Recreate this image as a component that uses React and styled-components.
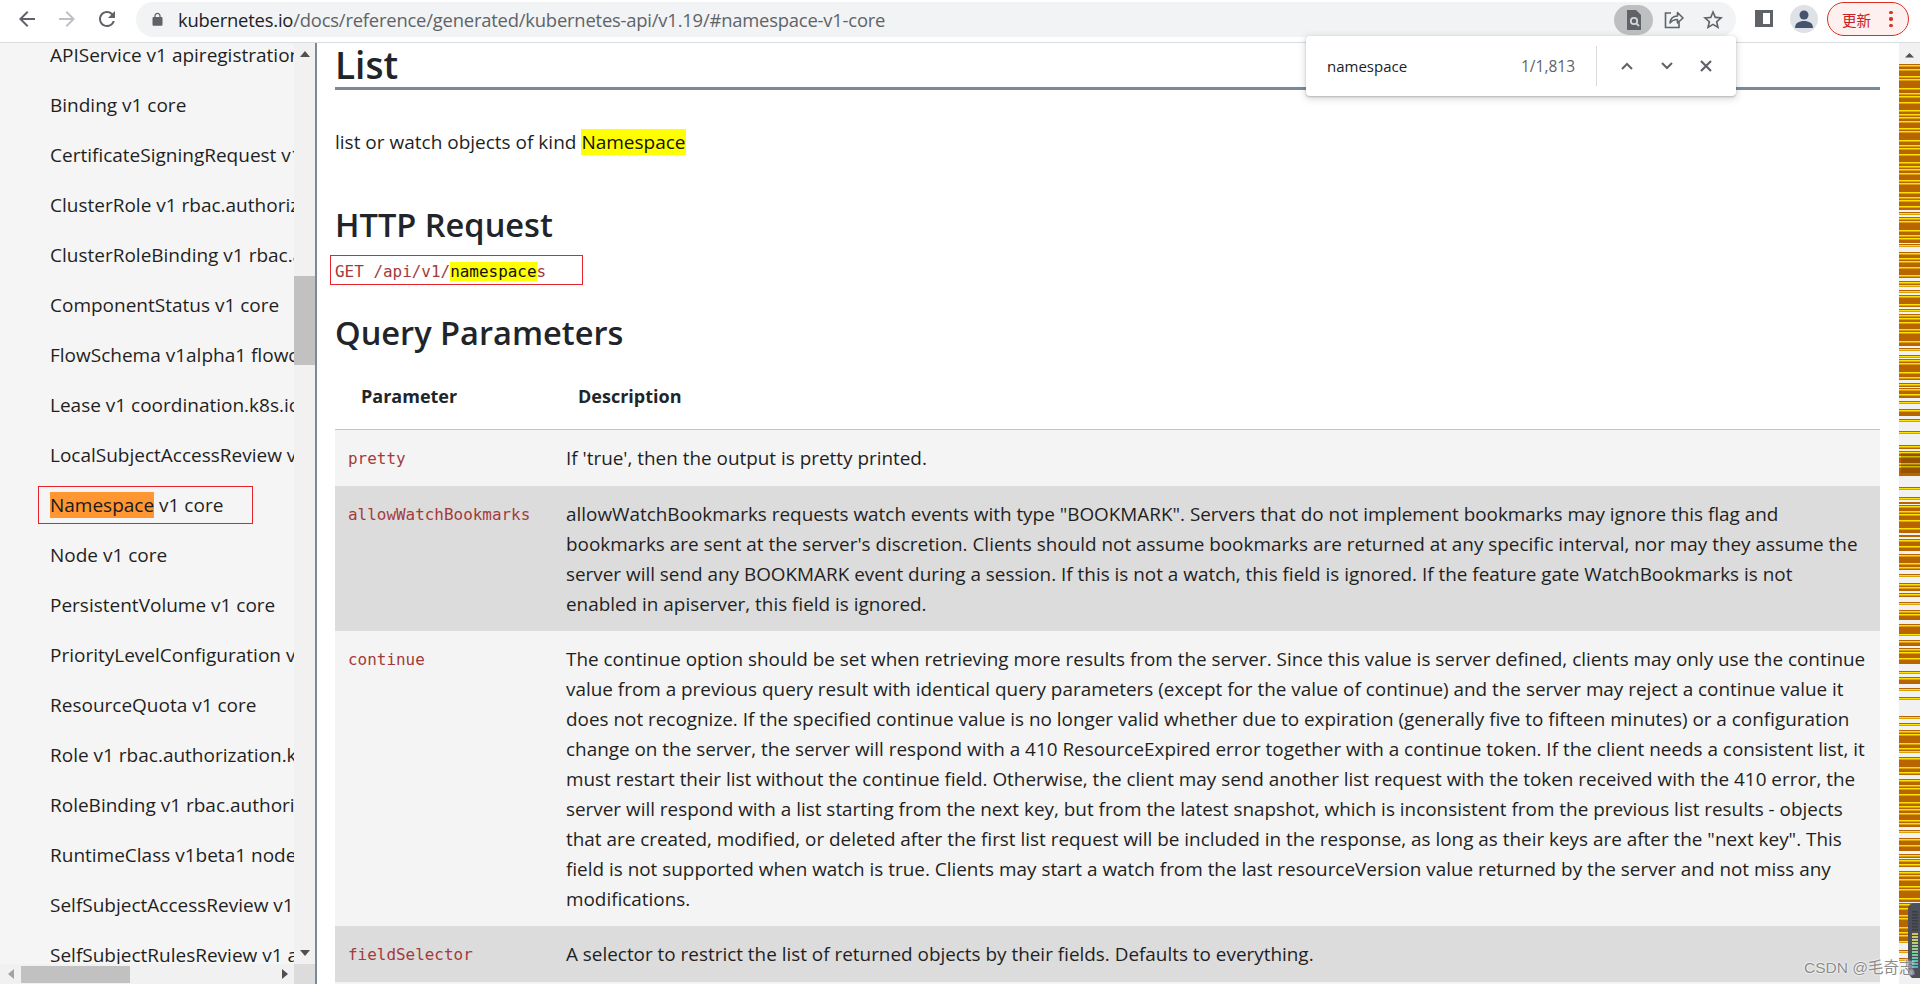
import React from 'react'
import styled, { createGlobalStyle } from 'styled-components'

const sideItems = [
  'APIService v1 apiregistration.k8s.io',
  'Binding v1 core',
  'CertificateSigningRequest v1 certificates.k8s.io',
  'ClusterRole v1 rbac.authorization.k8s.io',
  'ClusterRoleBinding v1 rbac.authorization.k8s.io',
  'ComponentStatus v1 core',
  'FlowSchema v1alpha1 flowcontrol.apiserver.k8s.io',
  'Lease v1 coordination.k8s.io',
  'LocalSubjectAccessReview v1 authorization.k8s.io',
  'Namespace v1 core',
  'Node v1 core',
  'PersistentVolume v1 core',
  'PriorityLevelConfiguration v1alpha1 flowcontrol',
  'ResourceQuota v1 core',
  'Role v1 rbac.authorization.k8s.io',
  'RoleBinding v1 rbac.authorization.k8s.io',
  'RuntimeClass v1beta1 node.k8s.io',
  'SelfSubjectAccessReview v1 authorization.k8s.io',
  'SelfSubjectRulesReview v1 authorization.k8s.io',
]

const params = [
  {
    name: 'pretty',
    lines: ["If 'true', then the output is pretty printed."],
  },
  {
    name: 'allowWatchBookmarks',
    lines: [
      'allowWatchBookmarks requests watch events with type "BOOKMARK". Servers that do not implement bookmarks may ignore this flag and',
      "bookmarks are sent at the server's discretion. Clients should not assume bookmarks are returned at any specific interval, nor may they assume the",
      'server will send any BOOKMARK event during a session. If this is not a watch, this field is ignored. If the feature gate WatchBookmarks is not',
      'enabled in apiserver, this field is ignored.',
    ],
  },
  {
    name: 'continue',
    lines: [
      'The continue option should be set when retrieving more results from the server. Since this value is server defined, clients may only use the continue',
      'value from a previous query result with identical query parameters (except for the value of continue) and the server may reject a continue value it',
      'does not recognize. If the specified continue value is no longer valid whether due to expiration (generally five to fifteen minutes) or a configuration',
      'change on the server, the server will respond with a 410 ResourceExpired error together with a continue token. If the client needs a consistent list, it',
      'must restart their list without the continue field. Otherwise, the client may send another list request with the token received with the 410 error, the',
      'server will respond with a list starting from the next key, but from the latest snapshot, which is inconsistent from the previous list results - objects',
      'that are created, modified, or deleted after the first list request will be included in the response, as long as their keys are after the "next key". This',
      'field is not supported when watch is true. Clients may start a watch from the last resourceVersion value returned by the server and not miss any',
      'modifications.',
    ],
  },
  {
    name: 'fieldSelector',
    lines: ['A selector to restrict the list of returned objects by their fields. Defaults to everything.'],
  },
]

// find-in-page tick marks, [top, bottom] in page pixels
const bands = [
  [64, 210], [212, 215], [217, 243], [244, 247], [252, 278], [281, 287], [290, 293], [295, 307],
  [309, 312], [314, 346], [348, 351], [355, 358], [359, 380], [383, 387], [388, 398], [401, 404],
  [409, 416], [419, 422], [431, 434], [445, 449], [451, 476], [487, 490], [497, 500], [502, 504],
  [505, 533], [535, 537], [539, 551], [554, 570], [574, 577], [583, 591], [593, 597], [602, 605],
  [610, 620], [624, 636], [640, 646], [648, 664], [671, 674], [677, 684], [688, 691], [697, 700],
  [716, 719], [723, 726], [730, 753], [757, 775], [779, 827], [830, 833], [838, 851], [854, 858],
  [859, 867], [871, 902], [903, 943], [950, 953], [958, 961],
]

const tickSteps = [4, 7, 3, 9, 5, 3, 6, 8, 4, 3]

const Ruler = () => {
  const ticks = []
  bands.forEach(([a, b], i) => {
    let y = a + 1
    let k = i
    while (y < b - 1) {
      ticks.push(y)
      y += tickSteps[k % tickSteps.length]
      k++
    }
  })
  return (
    <RulerSvg width="21" height="941" viewBox="0 0 21 941">
      <path d="M10.5 10 15 14.500H6z" fill="#505050" />
      {bands.map(([a, b]) => (
        <rect key={a} x="0" y={a - 43} width="21" height={b - a} fill="#b86500" />
      ))}
      {ticks.map((y) => (
        <rect key={y} x="0" y={y - 43} width="21" height="1.500" fill="#ffe100" />
      ))}
      <rect x="2" y="410" width="19" height="20" fill="#000" opacity="0.18" />
    </RulerSvg>
  )
}

const meterColors = ['#d2c25a', '#cfc862', '#c4cc6c', '#b5d077', '#a4d083', '#93d08e', '#82cf9a', '#74cba4', '#68c6ad', '#5ec0b3', '#58bab8', '#55b4bb']

const Meter = () => (
  <MeterSvg width="12" height="75" viewBox="0 0 12 75">
    <path d="M6 0h6v75H4l-4-4V6a6 6 0 0 1 6-6z" fill="#4d4f5b" />
    {[8, 11, 14, 17, 20, 23, 26].map((y) => (
      <rect key={y} x="4" y={y} width="6" height="1.500" fill="#3b3c45" />
    ))}
    {meterColors.map((c, i) => (
      <rect key={c} x="4" y={30 + i * 3} width="6" height="2" fill={c} />
    ))}
  </MeterSvg>
)

const Icon = ({ d, size = 24, color = '#5f6368' }) => (
  <svg width={size} height={size} viewBox="0 0 24 24" fill={color}>
    <path d={d} />
  </svg>
)

const ICONS = {
  back: 'M20 11H7.830l5.590-5.590L12 4l-8 8 8 8 1.410-1.410L7.830 13H20v-2z',
  forward: 'M12 4l-1.410 1.410L16.170 11H4v2h12.170l-5.580 5.590L12 20l8-8z',
  reload: 'M17.650 6.350A7.958 7.958 0 0 0 12 4c-4.420 0-7.990 3.580-7.990 8s3.570 8 7.990 8c3.730 0 6.840-2.550 7.730-6h-2.080A5.990 5.990 0 0 1 12 18c-3.310 0-6-2.690-6-6s2.690-6 6-6c1.660 0 3.140.690 4.220 1.780L13 11h7V4l-2.350 2.350z',
  lock: 'M18 8h-1V6c0-2.760-2.240-5-5-5S7 3.240 7 6v2H6c-1.100 0-2 .900-2 2v10c0 1.100.900 2 2 2h12c1.100 0 2-.900 2-2V10c0-1.100-.900-2-2-2zM9 6c0-1.660 1.340-3 3-3s3 1.340 3 3v2H9V6z',
  star: 'M22 9.240l-7.190-.620L12 2 9.190 8.630 2 9.240l5.460 4.730L5.820 21 12 17.270 18.180 21l-1.630-7.030L22 9.240zM12 15.400l-3.760 2.270 1-4.280-3.320-2.880 4.380-.380L12 6.100l1.710 4.040 4.380.380-3.320 2.880 1 4.280L12 15.400z',
}

const App = () => (
  <>
    <GlobalStyle />
    <Page>
      <Toolbar>
        <NavButton><Icon d={ICONS.back} /></NavButton>
        <NavButton><Icon d={ICONS.forward} color="#bdc1c6" /></NavButton>
        <NavButton><Icon d={ICONS.reload} /></NavButton>
        <Omnibox>
          <LockHold><Icon d={ICONS.lock} size={15} /></LockHold>
          <Url>
            <strong>kubernetes.io</strong>/docs/reference/generated/kubernetes-api/v1.19/#namespace-v1-core
          </Url>
          <OmniIcons>
            <FindChip>
              <svg width="20" height="22" viewBox="0 0 20 22">
                <path d="M3 1h9l5 5v15H3z" fill="#5f6368" />
                <circle cx="10" cy="12" r="3.200" fill="none" stroke="#d4d5d6" strokeWidth="1.800" />
                <path d="M12.300 14.300 15 17" stroke="#d4d5d6" strokeWidth="1.800" />
              </svg>
            </FindChip>
            <OmniIcon>
              <svg width="22" height="22" viewBox="0 0 22 22" fill="none" stroke="#5f6368" strokeWidth="1.600">
                <path d="M9 4H3.500v14.500H17V13" />
                <path d="M8 14c.5-4.500 3.500-7 7.500-7V3.500L21 9l-5.500 5v-3.500c-3 0-5.500 1-7.500 3.500z" strokeLinejoin="round" />
              </svg>
            </OmniIcon>
            <OmniIcon><Icon d={ICONS.star} /></OmniIcon>
          </OmniIcons>
        </Omnibox>
        <PanelIcon />
        <Avatar>
          <svg width="20" height="20" viewBox="0 0 20 20" fill="#44546f">
            <circle cx="10" cy="6" r="4.500" />
            <path d="M1 19c0-5 4-7 9-7s9 2 9 7z" />
          </svg>
        </Avatar>
        <UpdatePill>
          更新
          <Dots><i /><i /><i /></Dots>
        </UpdatePill>
      </Toolbar>
      <Body>
        <Sidebar>
          <SideList>
            {sideItems.map((item) =>
              item === 'Namespace v1 core' ? (
                <SideRow key={item}>
                  <SideBox>
                    <CurrentMatch>Namespace</CurrentMatch> v1 core
                  </SideBox>
                </SideRow>
              ) : (
                <SideRow key={item}>{item}</SideRow>
              )
            )}
          </SideList>
          <VTrack>
            <ArrowUp />
            <VThumb />
            <ArrowDown />
          </VTrack>
          <HTrack>
            <ArrowLeft />
            <HThumb />
            <ArrowRight />
          </HTrack>
          <Corner />
        </Sidebar>
        <Main>
          <Content>
            <ListTitle>List</ListTitle>
            <Lead>
              list or watch objects of kind <Match>Namespace</Match>
            </Lead>
            <SubTitle>HTTP Request</SubTitle>
            <RequestBox>
              GET /api/v1/<Match>namespace</Match>s
            </RequestBox>
            <SubTitle>Query Parameters</SubTitle>
            <HeadRow>
              <HeadCell>Parameter</HeadCell>
              <HeadCell>Description</HeadCell>
            </HeadRow>
            {params.map((p, i) => (
              <Row key={p.name} $odd={i % 2 === 1}>
                <ParamName>{p.name}</ParamName>
                <Desc>
                  {p.lines.map((line) => (
                    <DescLine key={line}>{line}</DescLine>
                  ))}
                </Desc>
              </Row>
            ))}
            <Row />
          </Content>
          <RulerHold>
            <Ruler />
          </RulerHold>
        </Main>
      </Body>
      <FindBar>
        <FindText>namespace</FindText>
        <FindCount>1/1,813</FindCount>
        <FindDivider />
        <FindButtons>
          <svg width="14" height="10" viewBox="0 0 14 10" fill="none" stroke="#5f6368" strokeWidth="2">
            <path d="M2 8l5-5 5 5" />
          </svg>
          <svg width="14" height="10" viewBox="0 0 14 10" fill="none" stroke="#5f6368" strokeWidth="2">
            <path d="M2 2l5 5 5-5" />
          </svg>
          <svg width="14" height="14" viewBox="0 0 14 14" fill="none" stroke="#5f6368" strokeWidth="2.200">
            <path d="M2 2l10 10M12 2 2 12" />
          </svg>
        </FindButtons>
      </FindBar>
      <Meter />
      <Watermark>CSDN @毛奇志</Watermark>
    </Page>
  </>
)

export default App

const GlobalStyle = createGlobalStyle`
  html, body {
    margin: 0;
    padding: 0;
    height: 100%;
    overflow: hidden;
    background: #fff;
  }
  body {
    font-family: "Open Sans", "Noto Sans", sans-serif;
    color: #1f1f1f;
  }
`

const Page = styled.div`
  position: relative;
  width: 1920px;
  height: 984px;
  display: flex;
  flex-direction: column;
  overflow: hidden;
`

const Toolbar = styled.div`
  height: 42px;
  flex: none;
  display: flex;
  align-items: flex-start;
  padding-left: 7px;
  background: #fff;
  border-bottom: 1px solid #dadce0;
`

const NavButton = styled.div`
  width: 40px;
  height: 38px;
  display: flex;
  align-items: center;
  justify-content: center;
  svg {
    display: block;
  }
`

const Omnibox = styled.div`
  width: 1600px;
  height: 35px;
  margin: 2px 0 0 9px;
  display: flex;
  align-items: center;
  background: #f1f3f4;
  border-radius: 18px;
`

const LockHold = styled.div`
  width: 15px;
  margin-left: 14px;
  display: flex;
`

const Url = styled.div`
  margin-left: 13px;
  font-size: 18.400px;
  letter-spacing: -0.200px;
  color: #5f6368;
  white-space: nowrap;
  strong {
    font-weight: 400;
    color: #202124;
  }
`

const OmniIcons = styled.div`
  margin-left: auto;
  margin-right: 3px;
  display: flex;
  align-items: center;
`

const FindChip = styled.div`
  width: 39px;
  height: 30px;
  display: flex;
  align-items: center;
  justify-content: center;
  border-radius: 15px;
  background: #bdbfc1;
`

const OmniIcon = styled.div`
  width: 40px;
  display: flex;
  justify-content: center;
`

const PanelIcon = styled.div`
  width: 18px;
  height: 17px;
  margin: 10px 0 0 19px;
  box-sizing: border-box;
  background: #fff;
  border: 3px solid #5f6368;
  border-left-width: 8px;
`

const Avatar = styled.div`
  width: 28px;
  height: 28px;
  margin: 5px 0 0 17px;
  border-radius: 50%;
  background: #dee1e6;
  display: flex;
  align-items: center;
  justify-content: center;
  overflow: hidden;
`

const UpdatePill = styled.div`
  width: 82px;
  height: 34px;
  margin: 2px 0 0 9px;
  padding-left: 14px;
  box-sizing: border-box;
  display: flex;
  align-items: center;
  border: 1.500px solid #d93025;
  border-radius: 17px;
  background: #fdf0ee;
  color: #c5221f;
  font-size: 14.500px;
  font-family: "Noto Sans CJK SC", sans-serif;
`

const Dots = styled.div`
  margin-left: 18px;
  display: flex;
  flex-direction: column;
  gap: 3px;
  i {
    display: block;
    width: 3.500px;
    height: 3.500px;
    border-radius: 50%;
    background: #d93025;
  }
`

const Body = styled.div`
  flex: 1;
  min-height: 0;
  display: flex;
`

const Sidebar = styled.div`
  width: 317px;
  flex: none;
  box-sizing: border-box;
  border-right: 2px solid #7a8a99;
  display: grid;
  grid-template-columns: 294px 21px;
  grid-template-rows: 921px 20px;
  overflow: hidden;
`

const SideList = styled.div`
  background: #f5f5f5;
  overflow: hidden;
  padding-left: 50px;
`

const SideRow = styled.div`
  height: 50px;
  display: flex;
  align-items: center;
  font-size: 19px;
  white-space: nowrap;
  &:first-child {
    margin-top: -13px;
  }
`

const SideBox = styled.span`
  position: relative;
  &::after {
    content: '';
    position: absolute;
    left: -12px;
    right: -30px;
    top: -6px;
    bottom: -6px;
    border: 1px solid #e8232a;
  }
`

const CurrentMatch = styled.span`
  background: #ff9632;
  color: #1a1a1a;
`

const VTrack = styled.div`
  background: #f1f1f1;
  display: flex;
  flex-direction: column;
  align-items: center;
`

const VThumb = styled.div`
  width: 100%;
  height: 89px;
  margin: 219px 0 auto;
  background: #c1c1c1;
`

const ArrowUp = styled.div`
  width: 0;
  height: 0;
  margin-top: 8px;
  border: 5px solid transparent;
  border-top: 0;
  border-bottom: 6px solid #505050;
`

const ArrowDown = styled.div`
  width: 0;
  height: 0;
  margin-bottom: 8px;
  border: 5px solid transparent;
  border-bottom: 0;
  border-top: 6px solid #505050;
`

const HTrack = styled.div`
  background: #f1f1f1;
  display: flex;
  align-items: center;
`

const HThumb = styled.div`
  width: 109px;
  height: 17px;
  margin-right: auto;
  background: #c1c1c1;
`

const ArrowLeft = styled.div`
  width: 0;
  height: 0;
  margin: 0 7px 0 8px;
  border: 5px solid transparent;
  border-left: 0;
  border-right: 6px solid #a3a3a3;
`

const ArrowRight = styled.div`
  width: 0;
  height: 0;
  margin-right: 6px;
  border: 5px solid transparent;
  border-right: 0;
  border-left: 6px solid #505050;
`

const Corner = styled.div`
  background: #dcdcdc;
`

const Main = styled.div`
  flex: 1;
  min-width: 0;
  display: flex;
  justify-content: space-between;
  padding-left: 18px;
  overflow: hidden;
`

const Content = styled.div`
  width: 1545px;
  flex: none;
`

const ListTitle = styled.h1`
  margin: 0;
  height: 44px;
  box-sizing: content-box;
  border-bottom: 3px solid #7a8a99;
  font-size: 37px;
  line-height: 44px;
  font-weight: 600;
  color: #212529;
`

const Lead = styled.div`
  margin-top: 37px;
  font-size: 19px;
  line-height: 30px;
`

const Match = styled.span`
  background: #ffff00;
  color: #111;
`

const SubTitle = styled.h2`
  margin: 48px 0 0;
  font-size: 32.600px;
  line-height: 40px;
  font-weight: 600;
  color: #212529;
  & + div {
    margin-top: 10px;
  }
`

const RequestBox = styled.div`
  position: relative;
  width: 253px;
  height: 30px;
  margin-left: -5px;
  margin-bottom: -20px;
  padding: 2px 0 0 4px;
  box-sizing: border-box;
  border: 1px solid #e8232a;
  display: flex;
  align-items: center;
  white-space: pre;
  font-family: "DejaVu Sans Mono", monospace;
  font-size: 15.950px;
  color: #a33b3b;
`

const HeadRow = styled.div`
  display: flex;
  height: 66px;
  align-items: center;
  margin-top: 10px;
  border-bottom: 1px solid #b5c3dc;
`

const HeadCell = styled.div`
  font-size: 18px;
  font-weight: 700;
  color: #212529;
  &:first-child {
    width: 243px;
    padding-left: 26px;
    box-sizing: border-box;
  }
`

const Row = styled.div`
  display: flex;
  min-height: 55px;
  box-sizing: border-box;
  padding: 13px 0 12px;
  background: ${(p) => (p.$odd ? '#dcdcdc' : '#f4f4f4')};
`

const ParamName = styled.div`
  width: 231px;
  flex: none;
  padding: 1px 0 0 13px;
  box-sizing: border-box;
  font-family: "DejaVu Sans Mono", monospace;
  font-size: 15.950px;
  line-height: 30px;
  color: #a33b3b;
`

const Desc = styled.div`
  font-size: 18.900px;
`

const DescLine = styled.div`
  line-height: 30px;
  white-space: nowrap;
`

const RulerHold = styled.div`
  width: 21px;
  flex: none;
  background: #f1f1f1;
`

const RulerSvg = styled.svg`
  display: block;
`

const MeterSvg = styled.svg`
  position: absolute;
  left: 1908px;
  top: 903px;
`

const FindBar = styled.div`
  position: absolute;
  left: 1306px;
  top: 36px;
  width: 430px;
  height: 60px;
  box-sizing: border-box;
  display: flex;
  align-items: center;
  padding-left: 21px;
  background: #fff;
  border-radius: 4px;
  box-shadow: 0 1px 2px rgba(60, 64, 67, 0.3), 0 2px 6px 2px rgba(60, 64, 67, 0.15);
`

const FindText = styled.div`
  width: 194px;
  font-size: 15px;
  color: #202124;
`

const FindCount = styled.div`
  width: 75px;
  font-size: 15.500px;
  color: #5f6368;
`

const FindDivider = styled.div`
  width: 1px;
  height: 40px;
  background: #dadce0;
`

const FindButtons = styled.div`
  flex: 1;
  display: flex;
  align-items: center;
  padding: 0 23px;
  justify-content: space-between;
`

const Watermark = styled.div`
  position: absolute;
  left: 1804px;
  top: 958px;
  font-family: "Liberation Sans", "Noto Sans CJK SC", sans-serif;
  font-size: 15.500px;
  line-height: 20px;
  color: #8c8c8c;
  white-space: nowrap;
  text-shadow: 0 0 2px #fff, 0 0 2px #fff;
`
